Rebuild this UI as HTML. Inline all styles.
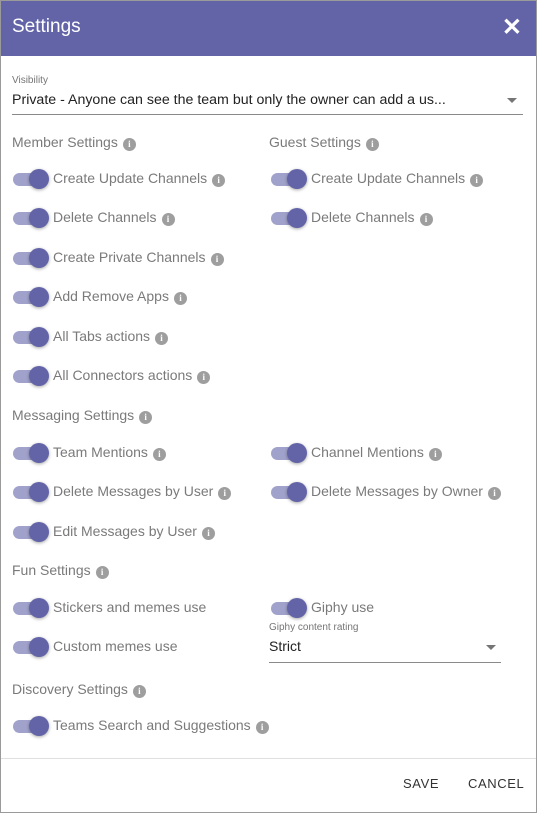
<!DOCTYPE html>
<html><head><style>
body{margin:0;width:537px;height:813px;font-family:"Liberation Sans",sans-serif;background:#fff;overflow:hidden}
.frame{position:absolute;left:0;top:0;width:535px;height:811px;border:1px solid #9a9a9a;}
.hdr{position:absolute;left:0;top:0;width:535px;height:55px;background:#6264a7;color:#fff;font-size:19px;}
.hdr .t{position:absolute;left:11px;top:15px}
.hdr .x{position:absolute;right:14px;top:12px;font-size:24px;font-weight:bold}
.a{position:absolute;white-space:nowrap}
.h{font-size:14px;color:#7a7a7a}
.l{font-size:14px;color:#7a7a7a}
.i{display:inline-block;width:13px;height:13px;border-radius:50%;background:#9e9e9e;color:#fff;font-size:9px;font-weight:bold;text-align:center;line-height:13px;vertical-align:0px;margin-left:5px;font-family:"Liberation Serif",serif}
.tg{position:absolute;width:34px;height:13px;border-radius:7px;background:#a1a2cc}
.tg:after{content:"";position:absolute;left:16px;top:-4px;width:20px;height:20px;border-radius:50%;background:#6264a7;box-shadow:0 1px 3px rgba(0,0,0,.35)}
.line{position:absolute;height:1px;background:#8a8a8a}
.cap{font-size:10px;color:#757575}
.arr{position:absolute;width:0;height:0;border-left:5px solid transparent;border-right:5px solid transparent;border-top:5px solid #757575}
.btn{font-size:13px;color:#333;letter-spacing:0.6px}
</style></head><body>
<div class="frame">
<div class="hdr"><span class="t">Settings</span><span class="x">✕</span></div>
<div class="a cap" style="left:11px;top:74px">Visibility</div>
<div class="a" style="left:11px;top:91px;font-size:14.2px;color:#222">Private - Anyone can see the team but only the owner can add a us...</div>
<div class="arr" style="left:506px;top:97px"></div>
<div class="line" style="left:11px;top:113px;width:511px"></div>

<div class="a h" style="left:11px;top:133px">Member Settings<span class="i">i</span></div>
<div class="a h" style="left:268px;top:133px">Guest Settings<span class="i">i</span></div>

<div class="tg" style="left:12px;top:172px"></div><div class="a l" style="left:52px;top:169px">Create Update Channels<span class="i">i</span></div>
<div class="tg" style="left:270px;top:172px"></div><div class="a l" style="left:310px;top:169px">Create Update Channels<span class="i">i</span></div>
<div class="tg" style="left:12px;top:211px"></div><div class="a l" style="left:52px;top:208px">Delete Channels<span class="i">i</span></div>
<div class="tg" style="left:270px;top:211px"></div><div class="a l" style="left:310px;top:208px">Delete Channels<span class="i">i</span></div>
<div class="tg" style="left:12px;top:251px"></div><div class="a l" style="left:52px;top:248px">Create Private Channels<span class="i">i</span></div>
<div class="tg" style="left:12px;top:290px"></div><div class="a l" style="left:52px;top:287px">Add Remove Apps<span class="i">i</span></div>
<div class="tg" style="left:12px;top:330px"></div><div class="a l" style="left:52px;top:327px">All Tabs actions<span class="i">i</span></div>
<div class="tg" style="left:12px;top:369px"></div><div class="a l" style="left:52px;top:366px">All Connectors actions<span class="i">i</span></div>

<div class="a h" style="left:11px;top:406px">Messaging Settings<span class="i">i</span></div>
<div class="tg" style="left:12px;top:446px"></div><div class="a l" style="left:52px;top:443px">Team Mentions<span class="i">i</span></div>
<div class="tg" style="left:270px;top:446px"></div><div class="a l" style="left:310px;top:443px">Channel Mentions<span class="i">i</span></div>
<div class="tg" style="left:12px;top:485px"></div><div class="a l" style="left:52px;top:482px">Delete Messages by User<span class="i">i</span></div>
<div class="tg" style="left:270px;top:485px"></div><div class="a l" style="left:310px;top:482px">Delete Messages by Owner<span class="i">i</span></div>
<div class="tg" style="left:12px;top:525px"></div><div class="a l" style="left:52px;top:522px">Edit Messages by User<span class="i">i</span></div>

<div class="a h" style="left:11px;top:561px">Fun Settings<span class="i">i</span></div>
<div class="tg" style="left:12px;top:601px"></div><div class="a l" style="left:52px;top:598px">Stickers and memes use</div>
<div class="tg" style="left:270px;top:601px"></div><div class="a l" style="left:310px;top:598px">Giphy use</div>
<div class="tg" style="left:12px;top:640px"></div><div class="a l" style="left:52px;top:637px">Custom memes use</div>
<div class="a cap" style="left:268px;top:621px">Giphy content rating</div>
<div class="a" style="left:268px;top:637px;font-size:14px;color:#222">Strict</div>
<div class="arr" style="left:485px;top:644px"></div>
<div class="line" style="left:268px;top:661px;width:232px"></div>

<div class="a h" style="left:11px;top:680px">Discovery Settings<span class="i">i</span></div>
<div class="tg" style="left:12px;top:719px"></div><div class="a l" style="left:52px;top:716px">Teams Search and Suggestions<span class="i">i</span></div>

<div class="line" style="left:0;top:757px;width:535px;background:#e0e0e0"></div>
<div class="a btn" style="left:402px;top:775px">SAVE</div>
<div class="a btn" style="left:467px;top:775px">CANCEL</div>
</div>
</body></html>
